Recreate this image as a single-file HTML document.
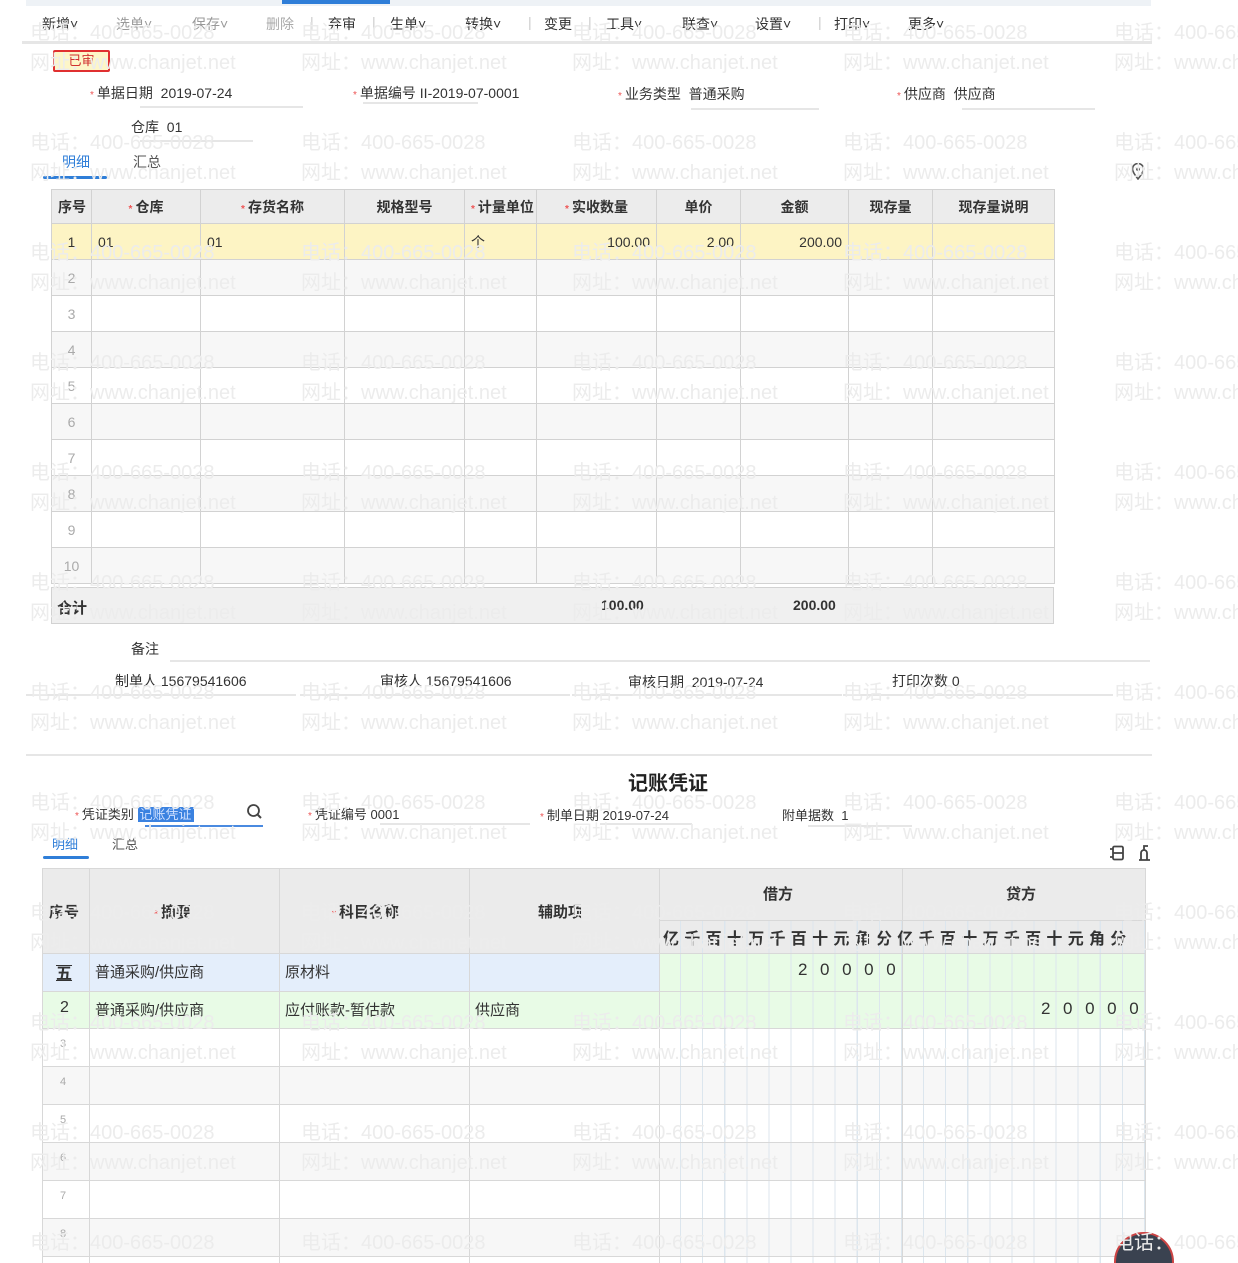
<!DOCTYPE html>
<html><head><meta charset="utf-8"><style>
*{margin:0;padding:0;box-sizing:border-box}
html,body{width:1238px;height:1263px;overflow:hidden}
body{background:#fff;position:relative;font-family:"Liberation Sans","Noto Sans CJK SC",sans-serif;font-size:14px;color:#333}
#wrap{position:absolute;left:0;top:0;width:1238px;height:1263px;overflow:hidden}
.a{position:absolute;white-space:nowrap}
.wm{position:absolute;left:30px;font-size:20px;color:#ececec;white-space:nowrap;z-index:5;width:1208px;overflow:hidden}
.wm span{display:inline-block;width:271px}
.r{color:#e55;font-size:10px;margin-right:3px}
.ul{position:absolute;height:2px;background:#e6e6e6}
table{border-collapse:collapse;table-layout:fixed}
.t1 td,.t1 th{border:1px solid #d2d2d2;height:36px;padding:0 6px;font-size:14px}
.t1 th{background:#ececec;font-weight:bold;height:34px}
.t1 tr.e td{background:#f7f7f7}
.n{color:#aaa;font-size:11px;text-align:center}
.v{position:absolute;top:0;width:1px;background:#d8d8d8}
.h{position:absolute;left:0;height:1px;background:#d8d8d8}
</style></head><body><div id="wrap">
<div class="a" style="left:26px;top:0;width:1125px;height:6px;background:#eef2f6"></div>
<div class="a" style="left:282px;top:0;width:108px;height:4px;background:#2f7ed8"></div>
<div class="a" style="left:42px;top:14px;font-size:14px;color:#333;width:1000px;height:20px">
<span class="a" style="left:0">新增˅</span>
<span class="a" style="left:74px;color:#999">选单˅</span>
<span class="a" style="left:150px;color:#999">保存˅</span>
<span class="a" style="left:224px;color:#aaa">删除</span>
<span class="a" style="left:268px;color:#ccc">|</span>
<span class="a" style="left:286px">弃审</span>
<span class="a" style="left:330px;color:#ccc">|</span>
<span class="a" style="left:348px">生单˅</span>
<span class="a" style="left:423px">转换˅</span>
<span class="a" style="left:486px;color:#ccc">|</span>
<span class="a" style="left:502px">变更</span>
<span class="a" style="left:546px;color:#ccc">|</span>
<span class="a" style="left:564px">工具˅</span>
<span class="a" style="left:640px">联查˅</span>
<span class="a" style="left:713px">设置˅</span>
<span class="a" style="left:776px;color:#ccc">|</span>
<span class="a" style="left:792px">打印˅</span>
<span class="a" style="left:866px">更多˅</span>
</div>
<div class="a" style="left:22px;top:41px;width:1130px;height:3px;background:#e6e6e6"></div>
<div class="a" style="left:53px;top:50px;width:57px;height:22px;border:2px solid #e03030;background:#fdf6c8;color:#d03030;font-size:13px;text-align:center;line-height:18px;border-radius:2px">已审</div>

<div class="a" style="left:90px;top:83px"><span class="r">*</span>单据日期&nbsp; 2019-07-24</div><div class="ul" style="left:140px;top:106px;width:163px"></div>
<div class="a" style="left:353px;top:83px"><span class="r">*</span>单据编号 II-2019-07-0001</div><div class="ul" style="left:363px;top:102px;width:115px"></div>
<div class="a" style="left:618px;top:84px"><span class="r">*</span>业务类型&nbsp; 普通采购</div><div class="ul" style="left:691px;top:108px;width:128px"></div>
<div class="a" style="left:897px;top:84px"><span class="r">*</span>供应商&nbsp; 供应商</div><div class="ul" style="left:962px;top:108px;width:133px"></div>
<div class="a" style="left:131px;top:117px">仓库&nbsp; 01</div><div class="ul" style="left:140px;top:140px;width:113px"></div>
<div class="a" style="left:62px;top:152px;color:#2f7ed8">明细</div>
<div class="a" style="left:133px;top:152px;color:#555">汇总</div>
<div class="a" style="left:43px;top:176px;width:64px;height:3px;background:#2f7ed8;border-radius:2px"></div>
<svg class="a" style="left:1131px;top:163px" width="14" height="17" viewBox="0 0 14 17"><path d="M7 16C3 11 1.5 8.5 1.5 6a5.5 5.5 0 0 1 11 0c0 2.5-1.5 5-5.5 10z" fill="none" stroke="#555" stroke-width="1.6"/><circle cx="7" cy="6" r="2" fill="#555"/></svg>

<table class="t1 a" style="left:51px;top:189px;width:1003px">
<colgroup><col style="width:40px"><col style="width:109px"><col style="width:144px"><col style="width:120px"><col style="width:72px"><col style="width:120px"><col style="width:84px"><col style="width:108px"><col style="width:84px"><col style="width:122px"></colgroup>
<tr><th>序号</th><th><span class="r">*</span>仓库</th><th><span class="r">*</span>存货名称</th><th>规格型号</th><th><span class="r">*</span>计量单位</th><th><span class="r">*</span>实收数量</th><th>单价</th><th>金额</th><th>现存量</th><th>现存量说明</th></tr>
<tr style="background:#fdf4c4"><td style="text-align:center">1</td><td>01</td><td>01</td><td></td><td>个</td><td style="text-align:right">100.00</td><td style="text-align:right">2.00</td><td style="text-align:right">200.00</td><td></td><td></td></tr>
<tr class="e"><td class="n">2</td><td></td><td></td><td></td><td></td><td></td><td></td><td></td><td></td><td></td></tr>
<tr><td class="n">3</td><td></td><td></td><td></td><td></td><td></td><td></td><td></td><td></td><td></td></tr>
<tr class="e"><td class="n">4</td><td></td><td></td><td></td><td></td><td></td><td></td><td></td><td></td><td></td></tr>
<tr><td class="n">5</td><td></td><td></td><td></td><td></td><td></td><td></td><td></td><td></td><td></td></tr>
<tr class="e"><td class="n">6</td><td></td><td></td><td></td><td></td><td></td><td></td><td></td><td></td><td></td></tr>
<tr><td class="n">7</td><td></td><td></td><td></td><td></td><td></td><td></td><td></td><td></td><td></td></tr>
<tr class="e"><td class="n">8</td><td></td><td></td><td></td><td></td><td></td><td></td><td></td><td></td><td></td></tr>
<tr><td class="n">9</td><td></td><td></td><td></td><td></td><td></td><td></td><td></td><td></td><td></td></tr>
<tr class="e"><td class="n">10</td><td></td><td></td><td></td><td></td><td></td><td></td><td></td><td></td><td></td></tr>
</table>
<div class="a" style="left:51px;top:587px;width:1003px;height:37px;background:#f0f0f0;border:1px solid #d2d2d2"></div>
<div class="a" style="left:57px;top:597px;font-weight:bold;font-size:15px">合计</div>
<div class="a" style="left:601px;top:597px;font-weight:bold">100.00</div>
<div class="a" style="left:793px;top:597px;font-weight:bold">200.00</div>

<div class="a" style="left:131px;top:639px">备注</div><div class="ul" style="left:170px;top:660px;width:980px"></div>
<div class="a" style="left:115px;top:671px">制单人 15679541606</div><div class="ul" style="left:26px;top:694px;width:270px"></div>
<div class="a" style="left:380px;top:671px">审核人 15679541606</div><div class="ul" style="left:300px;top:694px;width:270px"></div>
<div class="a" style="left:628px;top:672px">审核日期&nbsp; 2019-07-24</div><div class="ul" style="left:572px;top:694px;width:270px"></div>
<div class="a" style="left:892px;top:671px">打印次数 0</div><div class="ul" style="left:843px;top:694px;width:270px"></div>
<div class="a" style="left:26px;top:754px;width:1126px;height:2px;background:#e6e6e6"></div>

<div class="a" style="left:628px;top:767px;font-size:20px;font-weight:bold;color:#222">记账凭证</div>
<div class="a" style="left:75px;top:804px;font-size:13px"><span class="r">*</span>凭证类别 <span style="background:#3b82e0;color:#cfe0ff;padding:0 2px">记账凭证</span></div>
<svg class="a" style="left:246px;top:803px" width="18" height="18" viewBox="0 0 18 18"><circle cx="7.5" cy="7.5" r="5.5" fill="none" stroke="#444" stroke-width="1.8"/><path d="M11.5 11.5L15 15" stroke="#444" stroke-width="2"/></svg>
<div class="ul" style="left:145px;top:825px;width:118px;background:#4a8ae0"></div>
<div class="a" style="left:308px;top:804px;font-size:13px"><span class="r">*</span>凭证编号 0001</div><div class="ul" style="left:380px;top:823px;width:150px"></div>
<div class="a" style="left:540px;top:805px;font-size:13px"><span class="r">*</span>制单日期 2019-07-24</div><div class="ul" style="left:600px;top:823px;width:92px"></div>
<div class="a" style="left:782px;top:805px;font-size:13px">附单据数&nbsp; 1</div><div class="ul" style="left:808px;top:825px;width:104px"></div>
<div class="a" style="left:52px;top:834px;color:#2f7ed8;font-size:13px">明细</div>
<div class="a" style="left:112px;top:834px;color:#555;font-size:13px">汇总</div>
<div class="a" style="left:43px;top:856px;width:46px;height:3px;background:#2f7ed8;border-radius:2px"></div>
<svg class="a" style="left:1109px;top:845px" width="16" height="16" viewBox="0 0 16 16"><rect x="4" y="1.5" width="10" height="13" rx="1.5" fill="none" stroke="#444" stroke-width="1.8"/><path d="M4 8h10M1 4h3M1 12h3" stroke="#444" stroke-width="1.8"/></svg>
<svg class="a" style="left:1136px;top:844px" width="16" height="18" viewBox="0 0 16 18"><path d="M3 16h11M5 16V9a3 3 0 0 1 6 0v7M8 6V2h4" fill="none" stroke="#444" stroke-width="1.8"/></svg>

<div class="a" style="left:42px;top:868px;width:1104px;height:395px;overflow:hidden">
 <div class="a" style="left:0;top:0;width:1104px;height:85px;background:#ebebeb"></div>
 <div class="a" style="left:0;top:85px;width:617px;height:38px;background:#e4eefb"></div>
 <div class="a" style="left:617px;top:85px;width:487px;height:38px;background:#e8fbe6"></div>
 <div class="a" style="left:0;top:123px;width:1104px;height:37px;background:#e8fbe6"></div>
 <div class="a" style="left:0;top:198px;width:1104px;height:38px;background:#f7f7f7"></div>
 <div class="a" style="left:0;top:274px;width:1104px;height:38px;background:#f7f7f7"></div>
 <div class="a" style="left:0;top:350px;width:1104px;height:38px;background:#f7f7f7"></div>
 <div class="a" style="left:617px;top:52px;width:486px;height:343px;background:repeating-linear-gradient(90deg,transparent 0 21px,#dce6ee 21px 22.09px)"></div>
 <div class="v" style="left:0;height:395px"></div>
 <div class="v" style="left:47px;height:395px"></div>
 <div class="v" style="left:237px;height:395px"></div>
 <div class="v" style="left:427px;height:395px"></div>
 <div class="v" style="left:617px;height:395px"></div>
 <div class="v" style="left:860px;height:395px"></div>
 <div class="v" style="left:1103px;height:395px"></div>
 <div class="h" style="left:617px;top:52px;width:487px"></div>
 <div class="h" style="top:0;width:1104px"></div>
 <div class="h" style="top:85px;width:1104px"></div>
 <div class="h" style="top:123px;width:1104px"></div>
 <div class="h" style="top:160px;width:1104px"></div>
 <div class="h" style="top:198px;width:1104px"></div>
 <div class="h" style="top:236px;width:1104px"></div>
 <div class="h" style="top:274px;width:1104px"></div>
 <div class="h" style="top:312px;width:1104px"></div>
 <div class="h" style="top:350px;width:1104px"></div>
 <div class="h" style="top:388px;width:1104px"></div>
 <div class="a" style="left:7px;top:33px;font-size:15px;font-weight:bold">序号</div>
 <div class="a" style="left:112px;top:33px;font-size:15px;font-weight:bold"><span class="r">*</span>摘要</div>
 <div class="a" style="left:290px;top:33px;font-size:15px;font-weight:bold"><span class="r">*</span>科目名称</div>
 <div class="a" style="left:496px;top:33px;font-size:15px;font-weight:bold">辅助项</div>
 <div class="a" style="left:721px;top:15px;font-size:15px;font-weight:bold">借方</div>
 <div class="a" style="left:964px;top:15px;font-size:15px;font-weight:bold">贷方</div>
 <div class="a" style="left:617px;top:57px;font-size:16px;font-weight:bold">
  <span style="display:inline-block;width:486px;letter-spacing:5.3px;padding-left:4px">亿千百十万千百十元角分亿千百十万千百十元角分</span></div>
 <div class="a" style="left:14px;top:92px;font-size:16px;font-weight:bold;text-decoration:underline overline">五</div>
 <div class="a" style="left:53px;top:93px;font-size:15px">普通采购/供应商</div>
 <div class="a" style="left:243px;top:93px;font-size:15px">原材料</div>
 <div class="a" style="left:18px;top:131px;font-size:16px">2</div>
 <div class="a" style="left:53px;top:131px;font-size:15px">普通采购/供应商</div>
 <div class="a" style="left:243px;top:131px;font-size:15px">应付账款-暂估款</div>
 <div class="a" style="left:433px;top:131px;font-size:15px">供应商</div>
 <div class="a" style="left:756px;top:92px;font-size:17px;letter-spacing:12.6px">20000</div>
 <div class="a" style="left:999px;top:131px;font-size:17px;letter-spacing:12.6px">20000</div>
 <div class="a n" style="left:18px;top:170px">3</div>
 <div class="a n" style="left:18px;top:208px">4</div>
 <div class="a n" style="left:18px;top:246px">5</div>
 <div class="a n" style="left:18px;top:284px">6</div>
 <div class="a n" style="left:18px;top:322px">7</div>
 <div class="a n" style="left:18px;top:360px">8</div>
</div>
<div class="a" style="left:1114px;top:1232px;width:60px;height:60px;border-radius:50%;background:#3a4250;border:2px solid #c44"></div>

<div class="wm" style="top:16px"><span>电话：400-665-0028</span><span>电话：400-665-0028</span><span>电话：400-665-0028</span><span>电话：400-665-0028</span><span>电话：400-665-0028</span></div>
<div class="wm" style="top:46px"><span>网址：www.chanjet.net</span><span>网址：www.chanjet.net</span><span>网址：www.chanjet.net</span><span>网址：www.chanjet.net</span><span>网址：www.chanjet.net</span></div>
<div class="wm" style="top:126px"><span>电话：400-665-0028</span><span>电话：400-665-0028</span><span>电话：400-665-0028</span><span>电话：400-665-0028</span><span>电话：400-665-0028</span></div>
<div class="wm" style="top:156px"><span>网址：www.chanjet.net</span><span>网址：www.chanjet.net</span><span>网址：www.chanjet.net</span><span>网址：www.chanjet.net</span><span>网址：www.chanjet.net</span></div>
<div class="wm" style="top:236px"><span>电话：400-665-0028</span><span>电话：400-665-0028</span><span>电话：400-665-0028</span><span>电话：400-665-0028</span><span>电话：400-665-0028</span></div>
<div class="wm" style="top:266px"><span>网址：www.chanjet.net</span><span>网址：www.chanjet.net</span><span>网址：www.chanjet.net</span><span>网址：www.chanjet.net</span><span>网址：www.chanjet.net</span></div>
<div class="wm" style="top:346px"><span>电话：400-665-0028</span><span>电话：400-665-0028</span><span>电话：400-665-0028</span><span>电话：400-665-0028</span><span>电话：400-665-0028</span></div>
<div class="wm" style="top:376px"><span>网址：www.chanjet.net</span><span>网址：www.chanjet.net</span><span>网址：www.chanjet.net</span><span>网址：www.chanjet.net</span><span>网址：www.chanjet.net</span></div>
<div class="wm" style="top:456px"><span>电话：400-665-0028</span><span>电话：400-665-0028</span><span>电话：400-665-0028</span><span>电话：400-665-0028</span><span>电话：400-665-0028</span></div>
<div class="wm" style="top:486px"><span>网址：www.chanjet.net</span><span>网址：www.chanjet.net</span><span>网址：www.chanjet.net</span><span>网址：www.chanjet.net</span><span>网址：www.chanjet.net</span></div>
<div class="wm" style="top:566px"><span>电话：400-665-0028</span><span>电话：400-665-0028</span><span>电话：400-665-0028</span><span>电话：400-665-0028</span><span>电话：400-665-0028</span></div>
<div class="wm" style="top:596px"><span>网址：www.chanjet.net</span><span>网址：www.chanjet.net</span><span>网址：www.chanjet.net</span><span>网址：www.chanjet.net</span><span>网址：www.chanjet.net</span></div>
<div class="wm" style="top:676px"><span>电话：400-665-0028</span><span>电话：400-665-0028</span><span>电话：400-665-0028</span><span>电话：400-665-0028</span><span>电话：400-665-0028</span></div>
<div class="wm" style="top:706px"><span>网址：www.chanjet.net</span><span>网址：www.chanjet.net</span><span>网址：www.chanjet.net</span><span>网址：www.chanjet.net</span><span>网址：www.chanjet.net</span></div>
<div class="wm" style="top:786px"><span>电话：400-665-0028</span><span>电话：400-665-0028</span><span>电话：400-665-0028</span><span>电话：400-665-0028</span><span>电话：400-665-0028</span></div>
<div class="wm" style="top:816px"><span>网址：www.chanjet.net</span><span>网址：www.chanjet.net</span><span>网址：www.chanjet.net</span><span>网址：www.chanjet.net</span><span>网址：www.chanjet.net</span></div>
<div class="wm" style="top:896px"><span>电话：400-665-0028</span><span>电话：400-665-0028</span><span>电话：400-665-0028</span><span>电话：400-665-0028</span><span>电话：400-665-0028</span></div>
<div class="wm" style="top:926px"><span>网址：www.chanjet.net</span><span>网址：www.chanjet.net</span><span>网址：www.chanjet.net</span><span>网址：www.chanjet.net</span><span>网址：www.chanjet.net</span></div>
<div class="wm" style="top:1006px"><span>电话：400-665-0028</span><span>电话：400-665-0028</span><span>电话：400-665-0028</span><span>电话：400-665-0028</span><span>电话：400-665-0028</span></div>
<div class="wm" style="top:1036px"><span>网址：www.chanjet.net</span><span>网址：www.chanjet.net</span><span>网址：www.chanjet.net</span><span>网址：www.chanjet.net</span><span>网址：www.chanjet.net</span></div>
<div class="wm" style="top:1116px"><span>电话：400-665-0028</span><span>电话：400-665-0028</span><span>电话：400-665-0028</span><span>电话：400-665-0028</span><span>电话：400-665-0028</span></div>
<div class="wm" style="top:1146px"><span>网址：www.chanjet.net</span><span>网址：www.chanjet.net</span><span>网址：www.chanjet.net</span><span>网址：www.chanjet.net</span><span>网址：www.chanjet.net</span></div>
<div class="wm" style="top:1226px"><span>电话：400-665-0028</span><span>电话：400-665-0028</span><span>电话：400-665-0028</span><span>电话：400-665-0028</span><span>电话：400-665-0028</span></div>
</div></body></html>
